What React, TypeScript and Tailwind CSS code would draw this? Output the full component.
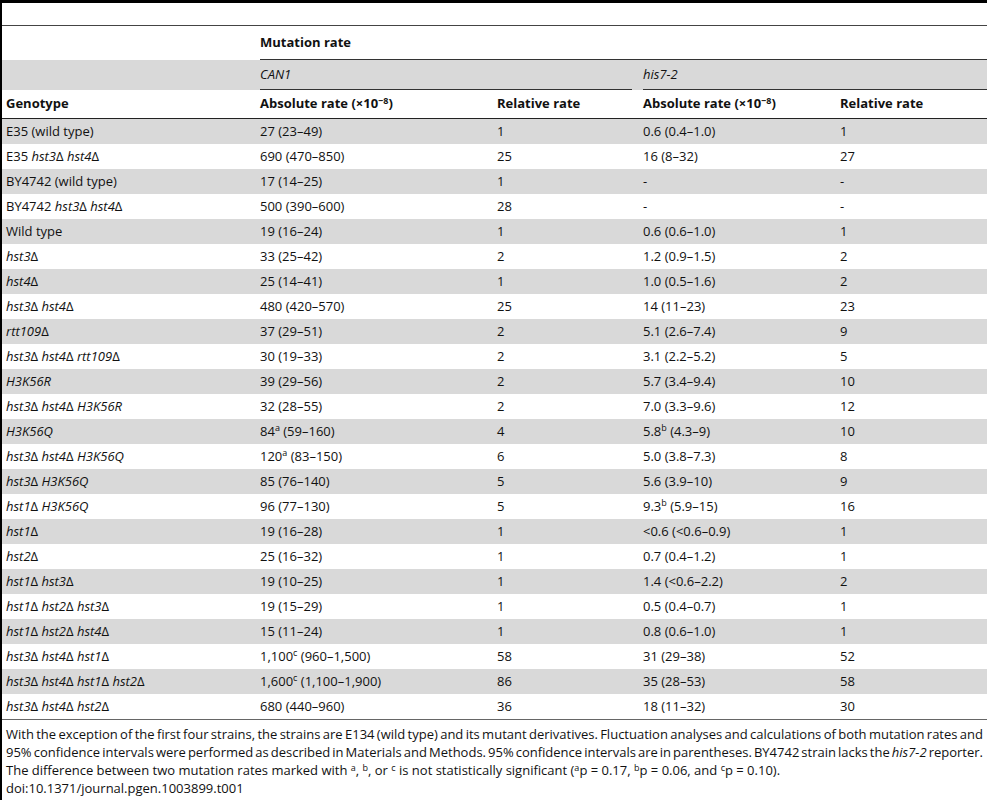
import React from "react";

const PLAIN = new Set(["E35", "BY4742", "Wild", "type", "(wild", "type)"]);

function Geno({ s }: { s: string }) {
  const toks = s.split(" ");
  return (
    <>
      {toks.map((t, i) => {
        const sep = i < toks.length - 1 ? " " : "";
        if (PLAIN.has(t)) return <span key={i}>{t + sep}</span>;
        const hasD = t.endsWith("Δ");
        const base = hasD ? t.slice(0, -1) : t;
        return (
          <span key={i}>
            <i>{base}</i>
            {hasD ? "Δ" : ""}
            {sep}
          </span>
        );
      })}
    </>
  );
}

function Val({ s }: { s: string }) {
  const m = s.match(/^([^\^]*)\^([abc])(.*)$/);
  if (!m) return <>{s}</>;
  return (
    <>
      {m[1]}
      <sup className="text-[9px]">{m[2]}</sup>
      {m[3]}
    </>
  );
}

const rows: [string, string, string, string, string][] = [
  ["E35 (wild type)", "27 (23–49)", "1", "0.6 (0.4–1.0)", "1"],
  ["E35 hst3Δ hst4Δ", "690 (470–850)", "25", "16 (8–32)", "27"],
  ["BY4742 (wild type)", "17 (14–25)", "1", "-", "-"],
  ["BY4742 hst3Δ hst4Δ", "500 (390–600)", "28", "-", "-"],
  ["Wild type", "19 (16–24)", "1", "0.6 (0.6–1.0)", "1"],
  ["hst3Δ", "33 (25–42)", "2", "1.2 (0.9–1.5)", "2"],
  ["hst4Δ", "25 (14–41)", "1", "1.0 (0.5–1.6)", "2"],
  ["hst3Δ hst4Δ", "480 (420–570)", "25", "14 (11–23)", "23"],
  ["rtt109Δ", "37 (29–51)", "2", "5.1 (2.6–7.4)", "9"],
  ["hst3Δ hst4Δ rtt109Δ", "30 (19–33)", "2", "3.1 (2.2–5.2)", "5"],
  ["H3K56R", "39 (29–56)", "2", "5.7 (3.4–9.4)", "10"],
  ["hst3Δ hst4Δ H3K56R", "32 (28–55)", "2", "7.0 (3.3–9.6)", "12"],
  ["H3K56Q", "84^a (59–160)", "4", "5.8^b (4.3–9)", "10"],
  ["hst3Δ hst4Δ H3K56Q", "120^a (83–150)", "6", "5.0 (3.8–7.3)", "8"],
  ["hst3Δ H3K56Q", "85 (76–140)", "5", "5.6 (3.9–10)", "9"],
  ["hst1Δ H3K56Q", "96 (77–130)", "5", "9.3^b (5.9–15)", "16"],
  ["hst1Δ", "19 (16–28)", "1", "<0.6 (<0.6–0.9)", "1"],
  ["hst2Δ", "25 (16–32)", "1", "0.7 (0.4–1.2)", "1"],
  ["hst1Δ hst3Δ", "19 (10–25)", "1", "1.4 (<0.6–2.2)", "2"],
  ["hst1Δ hst2Δ hst3Δ", "19 (15–29)", "1", "0.5 (0.4–0.7)", "1"],
  ["hst1Δ hst2Δ hst4Δ", "15 (11–24)", "1", "0.8 (0.6–1.0)", "1"],
  ["hst3Δ hst4Δ hst1Δ", "1,100^c (960–1,500)", "58", "31 (29–38)", "52"],
  ["hst3Δ hst4Δ hst1Δ hst2Δ", "1,600^c (1,100–1,900)", "86", "35 (28–53)", "58"],
  ["hst3Δ hst4Δ hst2Δ", "680 (440–960)", "36", "18 (11–32)", "30"],
];

const GRID = "grid grid-cols-[253px_237px_145px_197px_153px]";

function Exp() {
  return (
    <>
      (×10<sup className="text-[9px]">−8</sup>)
    </>
  );
}

export default function App() {
  return (
    <div
      className="w-[987px] h-[800px] overflow-hidden bg-white text-[#111] border-l-2 border-t-[3px] border-black text-[13px]"
      style={{ fontFamily: '"Open Sans", "Noto Sans", sans-serif' }}
    >
      <div className="h-[23px] border-b border-[#444]" />
      <div className={`${GRID} h-[34px]`}>
        <div />
        <div className="col-span-4 pl-[5px]">
          <div className="h-full flex items-center font-bold border-b border-[#333] pt-[1px]">Mutation rate</div>
        </div>
      </div>
      <div className={`${GRID} h-[30px] bg-[#d9d9d9]`}>
        <div />
        <div className="col-span-2 pl-[5px] pr-[5px]">
          <div className="h-full flex items-center italic border-b border-[#333]">CAN1</div>
        </div>
        <div className="col-span-2 pl-[6px]">
          <div className="h-full flex items-center italic border-b border-[#333]">his7-2</div>
        </div>
      </div>
      <div className={`${GRID} h-[29px] font-bold border-b border-[#222] items-center`}>
        <div className="pl-1">Genotype</div>
        <div className="pl-[5px]">
          Absolute rate <Exp />
        </div>
        <div className="pl-[5px]">Relative rate</div>
        <div className="pl-[6px]">
          Absolute rate <Exp />
        </div>
        <div className="pl-[6px]">Relative rate</div>
      </div>
      <div className="border-b border-[#666]">
        {rows.map((r, i) => (
          <div
            key={i}
            className={`${GRID} h-[25px] items-center whitespace-nowrap ${i % 2 === 0 ? "bg-[#d9d9d9]" : "bg-white"}`}
          >
            <div className="pl-1">
              <Geno s={r[0]} />
            </div>
            <div className="pl-[5px]">
              <Val s={r[1]} />
            </div>
            <div className="pl-[5px]">{r[2]}</div>
            <div className="pl-[6px]">
              <Val s={r[3]} />
            </div>
            <div className="pl-[6px]">{r[4]}</div>
          </div>
        ))}
      </div>
      <div className="pl-1 pr-1 pt-[5px] leading-[18px]">
        <div className="text-justify [text-align-last:justify] whitespace-nowrap [word-spacing:-2px]">
          With the exception of the first four strains, the strains are E134 (wild type) and its mutant derivatives. Fluctuation analyses and calculations of both mutation rates and
        </div>
        <div className="text-justify [text-align-last:justify] whitespace-nowrap [word-spacing:-2px]">
          95% confidence intervals were performed as described in Materials and Methods. 95% confidence intervals are in parentheses. BY4742 strain lacks the <i>his7-2</i> reporter.
        </div>
        <div className="whitespace-nowrap">
          The difference between two mutation rates marked with <sup className="text-[9px]">a</sup>, <sup className="text-[9px]">b</sup>, or{" "}
          <sup className="text-[9px]">c</sup> is not statistically significant (<sup className="text-[9px]">a</sup>p = 0.17,{" "}
          <sup className="text-[9px]">b</sup>p = 0.06, and <sup className="text-[9px]">c</sup>p = 0.10).
        </div>
        <div>doi:10.1371/journal.pgen.1003899.t001</div>
      </div>
    </div>
  );
}
